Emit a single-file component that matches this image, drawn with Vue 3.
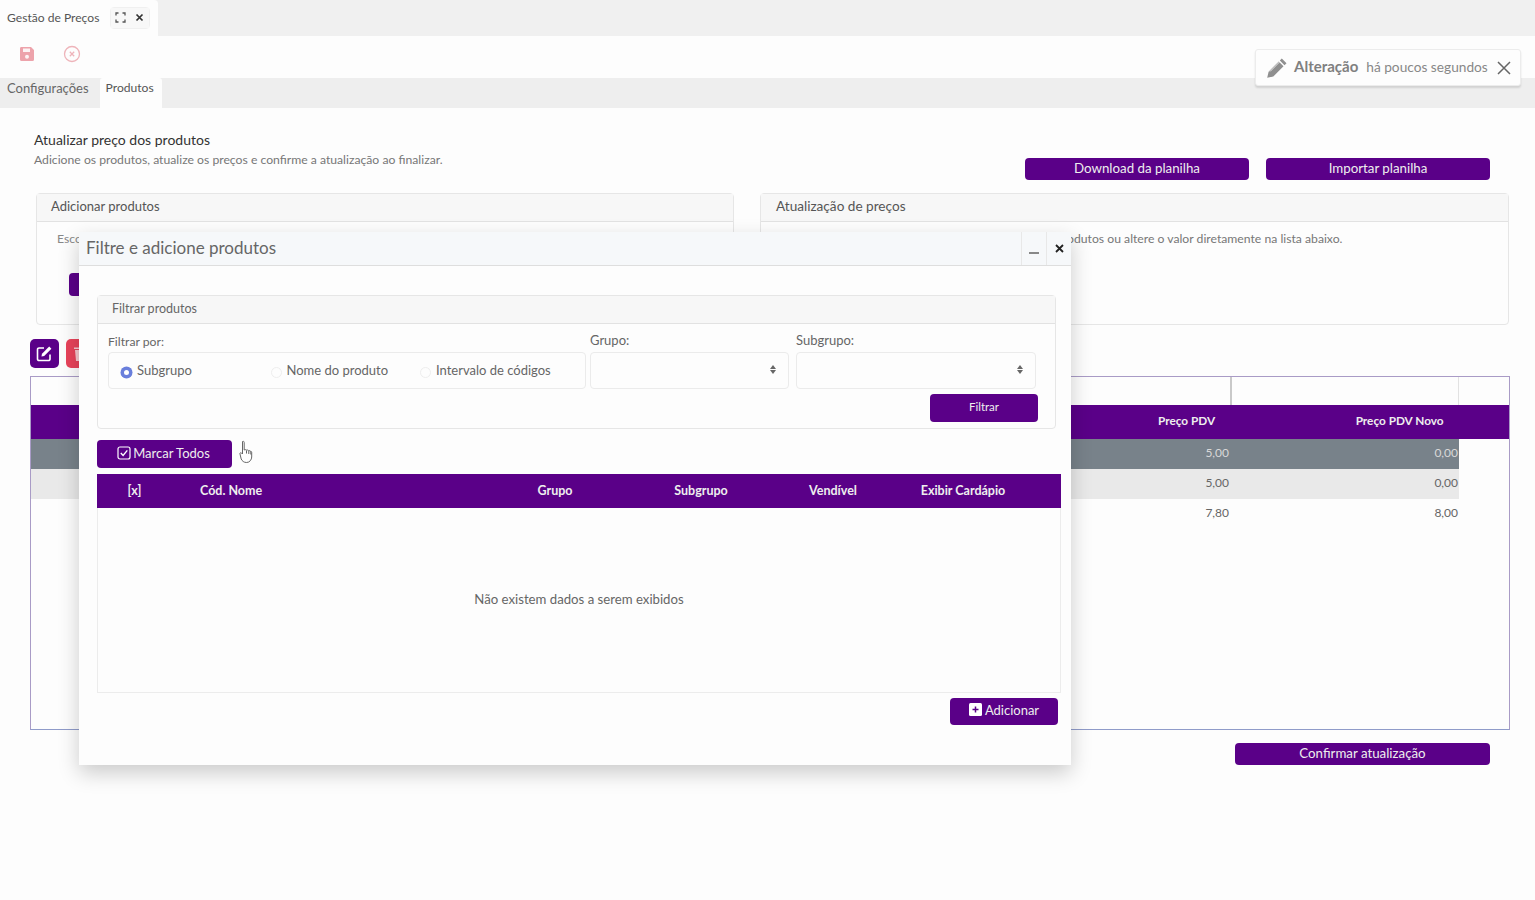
<script setup>
const rows = [
  { id: 1, price: '5,00', next: '0,00', tone: 'dark' },
  { id: 2, price: '5,00', next: '0,00', tone: 'light' },
  { id: 3, price: '7,80', next: '8,00', tone: '' }
]

const filterOptions = [
  { label: 'Subgrupo', checked: true },
  { label: 'Nome do produto', checked: false },
  { label: 'Intervalo de códigos', checked: false }
]

const modalColumns = ['Grupo', 'Subgrupo', 'Vendível', 'Exibir Cardápio']
</script>

<template>
  <div class="page">
    <div class="tabbar">
      <div class="tab">
        <span class="tab-title">Gestão de Preços</span>
        <div class="tab-actions">
          <button class="tab-btn">
            <svg width="11" height="11" viewBox="0 0 11 11" fill="none" stroke="#555" stroke-width="1.3">
              <path d="M1 3.5V1h2.5M7.5 1H10v2.5M10 7.5V10H7.5M3.5 10H1V7.5" />
            </svg>
          </button>
          <button class="tab-btn">
            <svg width="9" height="9" viewBox="0 0 9 9" stroke="#333" stroke-width="1.7">
              <path d="M1.5 1.5l6 6M7.5 1.5l-6 6" />
            </svg>
          </button>
        </div>
      </div>
    </div>

    <div class="toolbar">
      <svg width="16" height="16" viewBox="0 0 16 16">
        <path fill="#eda3ab" d="M2 1h10l3 3v9.500a1.500 1.500 0 0 1-1.500 1.500h-11A1.500 1.500 0 0 1 1 13.500v-11A1.500 1.500 0 0 1 2 1z" />
        <rect x="4" y="2.500" width="7" height="3.500" fill="#fdf3f4" />
        <circle cx="8" cy="10.800" r="2" fill="#fdf3f4" />
      </svg>
      <svg width="18" height="18" viewBox="0 0 18 18" fill="none" stroke="#eeb4ba" stroke-width="1.300">
        <circle cx="9" cy="9" r="7.500" />
        <path d="M6.800 6.800l4.400 4.400M11.200 6.800l-4.400 4.400" />
      </svg>
    </div>

    <div class="subtabs">
      <div class="subtab">Configurações</div>
      <div class="subtab active">Produtos</div>
    </div>

    <div class="content">
      <div class="intro">
        <div>
          <h1>Atualizar preço dos produtos</h1>
          <p>Adicione os produtos, atualize os preços e confirme a atualização ao finalizar.</p>
        </div>
        <div class="intro-actions">
          <button class="btn wide">Download da planilha</button>
          <button class="btn wide">Importar planilha</button>
        </div>
      </div>

      <div class="panels">
        <section class="panel left">
          <header>Adicionar produtos</header>
          <div class="panel-body">
            <p class="cut">Esco</p>
            <button class="btn add-open"></button>
          </div>
        </section>
        <section class="panel right">
          <header>Atualização de preços</header>
          <div class="panel-body">
            <p>Selecione os itens incluídos para alterar em lote os produtos ou altere o valor diretamente na lista abaixo.</p>
          </div>
        </section>
      </div>

      <div class="row-actions">
        <button class="square purple">
          <svg width="17" height="17" viewBox="0 0 17 17" fill="none" stroke="#fff" stroke-width="1.600">
            <path d="M14 9.500V14a1.500 1.500 0 0 1-1.500 1.500H3A1.500 1.500 0 0 1 1.500 14V4.500A1.500 1.500 0 0 1 3 3h5" />
            <path fill="#fff" stroke="none" d="M6 8.800L13.200 1.600l2.200 2.200-7.200 7.200L5.500 11.500z" />
          </svg>
        </button>
        <button class="square red">
          <svg width="13" height="15" viewBox="0 0 13 15" fill="#f6c9cf">
            <path d="M1 4h11l-1 11H2zM0 1.500h13V3H0z" />
          </svg>
        </button>
      </div>

      <div class="grid-box">
        <div class="grid-top">
          <span class="sep first"></span>
          <span class="sep"></span>
        </div>
        <div class="grid-head">
          <span class="head-price">Preço PDV</span>
          <span class="head-next">Preço PDV Novo</span>
        </div>
        <div v-for="row in rows" :key="row.id" class="grid-row" :class="row.tone">
          <span class="cell-price">{{ row.price }}</span>
          <span class="cell-next">{{ row.next }}</span>
        </div>
      </div>

      <div class="confirm-row">
        <button class="btn confirm">Confirmar atualização</button>
      </div>
    </div>

    <!-- Toast -->
    <div class="toast">
      <svg width="22" height="22" viewBox="0 0 22 22">
        <path fill="#8f8f8f" d="M15.800 1.500l4.700 4.700-2 2-4.700-4.700zM12.800 4.500l4.700 4.700L7.300 19.400 1.200 20.800l1.400-6.100z" />
        <path stroke="#fff" stroke-width=".8" d="M4 14.500l10-10" />
      </svg>
      <strong>Alteração</strong>
      <span>há poucos segundos</span>
      <svg class="toast-close" width="14" height="14" viewBox="0 0 14 14" stroke="#666" stroke-width="1.500">
        <path d="M1 1l12 12M13 1L1 13" />
      </svg>
    </div>

    <!-- Modal -->
    <div class="modal">
      <div class="modal-header">
        <h2>Filtre e adicione produtos</h2>
        <button class="modal-btn minimize"><i></i></button>
        <button class="modal-btn">
          <svg width="9" height="9" viewBox="0 0 9 9" stroke="#222" stroke-width="1.800">
            <path d="M1 1l7 7M8 1L1 8" />
          </svg>
        </button>
      </div>

      <div class="modal-body">
        <section class="filter-panel">
          <header>Filtrar produtos</header>
          <div class="filter-body">
            <div class="filter-row">
              <div class="field type-field">
                <label class="low">Filtrar por:</label>
                <div class="radio-box">
                  <div v-for="option in filterOptions" :key="option.label" class="radio-item">
                    <span class="radio" :class="{ checked: option.checked }"></span>
                    <span>{{ option.label }}</span>
                  </div>
                </div>
              </div>
              <div class="field group-field">
                <label>Grupo:</label>
                <div class="select"><span class="arrows"></span></div>
              </div>
              <div class="field subgroup-field">
                <label>Subgrupo:</label>
                <div class="select"><span class="arrows"></span></div>
              </div>
            </div>
            <div class="filter-action">
              <button class="btn filter-btn">Filtrar</button>
            </div>
          </div>
        </section>

        <button class="btn mark-all">
          <svg width="14" height="14" viewBox="0 0 14 14" fill="none" stroke="#fff" stroke-width="1.200">
            <rect x="1" y="1" width="12" height="12" rx="2" />
            <path stroke-width="1.400" d="M3.800 7l2.300 2.400 4.200-5" />
          </svg>
          Marcar Todos
        </button>

        <div class="modal-table">
          <div class="modal-table-head">
            <span class="col-check">[x]</span>
            <span class="col-name">Cód. Nome</span>
            <span v-for="col in modalColumns" :key="col" class="col-center">{{ col }}</span>
          </div>
          <div class="modal-table-empty">Não existem dados a serem exibidos</div>
        </div>

        <div class="modal-footer">
          <button class="btn add-btn">
            <svg width="13" height="13" viewBox="0 0 13 13">
              <rect width="13" height="13" rx="1.500" fill="#fff" />
              <path d="M6.500 3.500v6M3.500 6.500h6" stroke="#5a0088" stroke-width="1.500" />
            </svg>
            Adicionar
          </button>
        </div>
      </div>
    </div>

    <!-- Mouse pointer -->
    <svg class="pointer" width="16" height="24" viewBox="0 0 16 24" fill="#fff" stroke="#666" stroke-width="1">
      <path d="M3.500 1.500c.8-.6 1.700 0 1.700 1V10l1-.3c.7-.2 1.300 0 1.500.5.700-.4 1.500-.2 1.800.4.800-.3 1.500 0 1.700.7.800-.2 1.500.3 1.500 1.200V17c0 2.500-2 5.500-5 5.500-3 0-4.500-1.500-5.500-3.500L1 14c-.4-1 .6-1.700 1.500-1l1 1z" />
      <path d="M7.500 10.500v3M9.800 11v3M11.800 11.500v3" />
    </svg>
  </div>
</template>

<style scoped>
.page {
  position: relative;
  width: 1535px;
  height: 900px;
  overflow: hidden;
  background: #fdfdfd;
  color: #555;
  font-family: Lato, "Open Sans", sans-serif;
  font-size: 13px;
}

button {
  font-family: inherit;
  border: none;
  cursor: pointer;
  padding: 0;
}

.tabbar {
  height: 36px;
  background: #f0f0f0;
}

.tab {
  display: flex;
  align-items: center;
  width: 158px;
  height: 36px;
  box-sizing: border-box;
  padding-left: 7px;
  background: #fdfdfd;
  border-radius: 0 4px 0 0;
  color: #555;
}

.tab-title {
  font-size: 12.100px;
  margin-bottom: 2px;
}

.tab-actions {
  display: flex;
  margin-left: 11px;
  border: 1px solid #f0f0f0;
  border-radius: 4px;
  margin-bottom: 1px;
}

.tab-btn {
  display: flex;
  align-items: center;
  justify-content: center;
  width: 19px;
  height: 20px;
  background: #f8f8f8;
}

.toolbar {
  display: flex;
  align-items: center;
  gap: 28px;
  height: 42px;
  padding: 0 0 6px 19px;
  box-sizing: border-box;
}

.subtabs {
  display: flex;
  height: 30px;
  background: #eeeeee;
}

.subtab {
  padding: 3px 7px 0;
  height: 27px;
  color: #666;
  line-height: 15px;
}

.subtab.active {
  height: 30px;
  box-sizing: border-box;
  margin-left: 4px;
  padding: 2px 8px 0 6px;
  background: #fdfdfd;
  border-radius: 3px 3px 0 0;
  color: #555;
  font-size: 12.100px;
}

.content {
  padding: 24px 25px 0 30px;
}

.intro {
  display: flex;
  justify-content: space-between;
  height: 61px;
  padding-left: 4px;
}

.intro h1 {
  margin: 0;
  font-size: 14px;
  font-weight: 400;
  line-height: 16px;
  color: #333;
}

.intro p {
  margin: 4px 0 0;
  font-size: 12.200px;
  line-height: 15px;
  color: #777;
}

.intro-actions {
  display: flex;
  gap: 17px;
  margin: 26px 20px 0 0;
}

.btn {
  background: #5a0088;
  color: #eee;
  border-radius: 4px;
  font-size: 13.300px;
}

.btn.wide {
  width: 224px;
  height: 22px;
  padding-bottom: 3px;
}

.panels {
  display: flex;
  gap: 26px;
  padding-left: 6px;
}

.panel {
  height: 132px;
  box-sizing: border-box;
  border: 1px solid #e6e6e6;
  border-radius: 4px;
}

.panel.left {
  width: 698px;
}

.panel.right {
  flex: 1;
  margin-right: 1px;
}

.panel header {
  height: 28px;
  padding-left: 14px;
  background: #f7f7f7;
  border-bottom: 1px solid #e2e2e2;
  box-sizing: border-box;
  line-height: 24px;
  color: #555;
}

.panel.right header {
  padding-left: 15px;
  font-size: 13.600px;
}

.panel-body {
  padding: 9px 20px;
}

.panel-body p {
  margin: 0;
  font-size: 12.200px;
  line-height: 16px;
  color: #777;
  white-space: nowrap;
}

.panel.right .panel-body p {
  margin-left: 4px;
}

.panel-body p.cut {
  color: #888;
}

.add-open {
  display: block;
  width: 150px;
  height: 23px;
  margin: 26px 0 0 12px;
}

.row-actions {
  display: flex;
  gap: 7px;
  margin-top: 14px;
}

.square {
  display: flex;
  align-items: center;
  justify-content: center;
  width: 29px;
  height: 29px;
  border-radius: 5px;
}

.square.purple {
  background: #5a0088;
}

.square.red {
  background: #e8435a;
}

.grid-box {
  height: 354px;
  margin-top: 8px;
  box-sizing: border-box;
  border: 1px solid #a99bc6;
  border-bottom-color: #8f9bc9;
  font-size: 12px;
}

.grid-top {
  display: flex;
  justify-content: flex-end;
  height: 28px;
  padding-right: 50px;
}

.sep {
  width: 228px;
  box-sizing: border-box;
  border-left: 1px solid #c9c9c9;
}

.sep.first {
  width: 1px;
}

.sep:last-child {
  border-left: 1px solid #c9c9c9;
  border-right: 1px solid #e2e2e2;
}

.grid-head {
  display: flex;
  height: 34px;
  background: #5a0088;
  color: #eee;
  font-size: 11.800px;
  font-weight: 700;
  line-height: 31px;
}

.head-price {
  margin-left: 1127px;
}

.head-next {
  margin-left: 140.500px;
}

.grid-row {
  display: flex;
  justify-content: flex-end;
  height: 30px;
  margin-right: 50px;
  line-height: 27px;
  color: #666;
}

.grid-row.dark {
  background: #78828a;
  color: #d8d8d8;
}

.grid-row.light {
  background: #e9e9e9;
}

.cell-price {
  padding-right: 2px;
}

.cell-next {
  width: 228px;
  text-align: right;
  padding-right: 1px;
  box-sizing: border-box;
}

.confirm-row {
  display: flex;
  justify-content: flex-end;
  margin: 13px 20px 0 0;
}

.btn.confirm {
  width: 255px;
  height: 22px;
  padding-bottom: 2px;
}

.toast {
  position: absolute;
  top: 49px;
  left: 1255px;
  display: flex;
  align-items: center;
  width: 266px;
  height: 37px;
  box-sizing: border-box;
  padding: 0 9px 0 10px;
  background: #fdfdfd;
  border: 1px solid #ececec;
  border-radius: 3px;
  box-shadow: 0 2px 2px rgba(0, 0, 0, 0.12);
  color: #888;
}

.toast strong {
  margin: 0 0 4px 6px;
  font-size: 15px;
  font-weight: 700;
  color: #808080;
}

.toast span {
  margin: 0 0 3px 8px;
  font-size: 13.700px;
}

.toast-close {
  margin-left: auto;
}

.modal {
  position: absolute;
  top: 232px;
  left: 79px;
  width: 992px;
  height: 533px;
  background: #fdfdfd;
  box-shadow: 0 8px 20px rgba(0, 0, 0, 0.2);
}

.modal-header {
  display: flex;
  align-items: stretch;
  height: 34px;
  box-sizing: border-box;
  background: #f6f8fa;
  border-bottom: 1px solid #dedede;
}

.modal-header h2 {
  flex: 1;
  margin: 0;
  padding-left: 7px;
  font-size: 17px;
  font-weight: 400;
  line-height: 31px;
  color: #666;
}

.modal-btn {
  display: flex;
  align-items: center;
  justify-content: center;
  width: 25px;
  background: transparent;
  border-left: 1px solid #e8e8e8;
}

.minimize i {
  display: block;
  width: 10px;
  height: 2px;
  margin-top: 9px;
  background: #888;
}

.modal-body {
  padding: 29px 10px 0 18px;
}

.filter-panel {
  width: 959px;
  height: 134px;
  box-sizing: border-box;
  border: 1px solid #e6e6e6;
  border-radius: 4px;
}

.filter-panel header {
  height: 28px;
  box-sizing: border-box;
  padding-left: 14px;
  background: #f7f7f7;
  border-bottom: 1px solid #e2e2e2;
  font-size: 12.500px;
  line-height: 25px;
  color: #666;
}

.filter-body {
  padding: 9px 17px 0 10px;
}

.filter-row {
  display: flex;
  gap: 4px;
}

.field label {
  display: block;
  height: 19px;
  line-height: 14px;
  color: #666;
}

.field label.low {
  padding-top: 1px;
  height: 18px;
  line-height: 15px;
  font-size: 12.200px;
}

.type-field {
  width: 478px;
}

.group-field {
  width: 199px;
}

.subgroup-field {
  width: 240px;
  margin-left: 3px;
}

.radio-box {
  display: flex;
  align-items: center;
  height: 37px;
  box-sizing: border-box;
  padding-left: 12px;
  border: 1px solid #ebebeb;
  border-radius: 4px;
}

.radio-item {
  display: flex;
  align-items: center;
  gap: 5px;
  width: 149.500px;
  margin-top: -2px;
  color: #666;
}

.radio {
  width: 11px;
  height: 11px;
  margin-top: 5px;
  box-sizing: border-box;
  border: 1px solid #eeeeee;
  border-radius: 50%;
}

.radio.checked {
  background: #fff;
  border: 3.500px solid #6a7fdc;
  box-shadow: 0 0 0 .5px #6a7fdc;
}

.select {
  position: relative;
  height: 37px;
  box-sizing: border-box;
  border: 1px solid #ebebeb;
  border-radius: 4px;
}

.arrows {
  position: absolute;
  top: 12px;
  right: 12px;
  width: 6px;
  height: 9px;
}

.arrows::before,
.arrows::after {
  content: "";
  position: absolute;
  left: 0;
  border-left: 3px solid transparent;
  border-right: 3px solid transparent;
}

.arrows::before {
  top: 0;
  border-bottom: 4px solid #666;
}

.arrows::after {
  bottom: 0;
  border-top: 4px solid #666;
}

.filter-action {
  display: flex;
  justify-content: flex-end;
  margin-top: 5px;
}

.btn.filter-btn {
  width: 108px;
  height: 28px;
  padding-bottom: 4px;
  font-size: 11.500px;
}

.mark-all {
  display: flex;
  align-items: center;
  justify-content: center;
  gap: 2px;
  width: 135px;
  height: 28px;
  margin-top: 11px;
  padding-bottom: 2px;
  padding-right: 2px;
  font-size: 13px;
}

.modal-table {
  margin-top: 6px;
  width: 964px;
  height: 219px;
  box-sizing: border-box;
  border: 1px solid #ececec;
  border-top: none;
}

.modal-table-head {
  display: grid;
  grid-template-columns: 75px 328px 110px 182px 82px 178px;
  height: 34px;
  margin: 0 -1px;
  background: #5a0088;
  color: #eee;
  font-size: 12.500px;
  font-weight: 700;
  line-height: 33px;
}

.col-check,
.col-center {
  text-align: center;
}

.col-name {
  padding-left: 28px;
}

.modal-table-empty {
  padding-top: 83px;
  text-align: center;
  color: #666;
  font-size: 13.200px;
}

.modal-footer {
  display: flex;
  justify-content: flex-end;
  width: 961px;
  margin-top: 5px;
}

.add-btn {
  display: flex;
  align-items: center;
  justify-content: center;
  gap: 3px;
  width: 108px;
  height: 27px;
  padding-bottom: 4px;
  font-size: 13px;
}

.pointer {
  position: absolute;
  top: 440px;
  left: 239px;
}
</style>

<style>
html,
body {
  margin: 0;
  background: #fdfdfd;
}
</style>
